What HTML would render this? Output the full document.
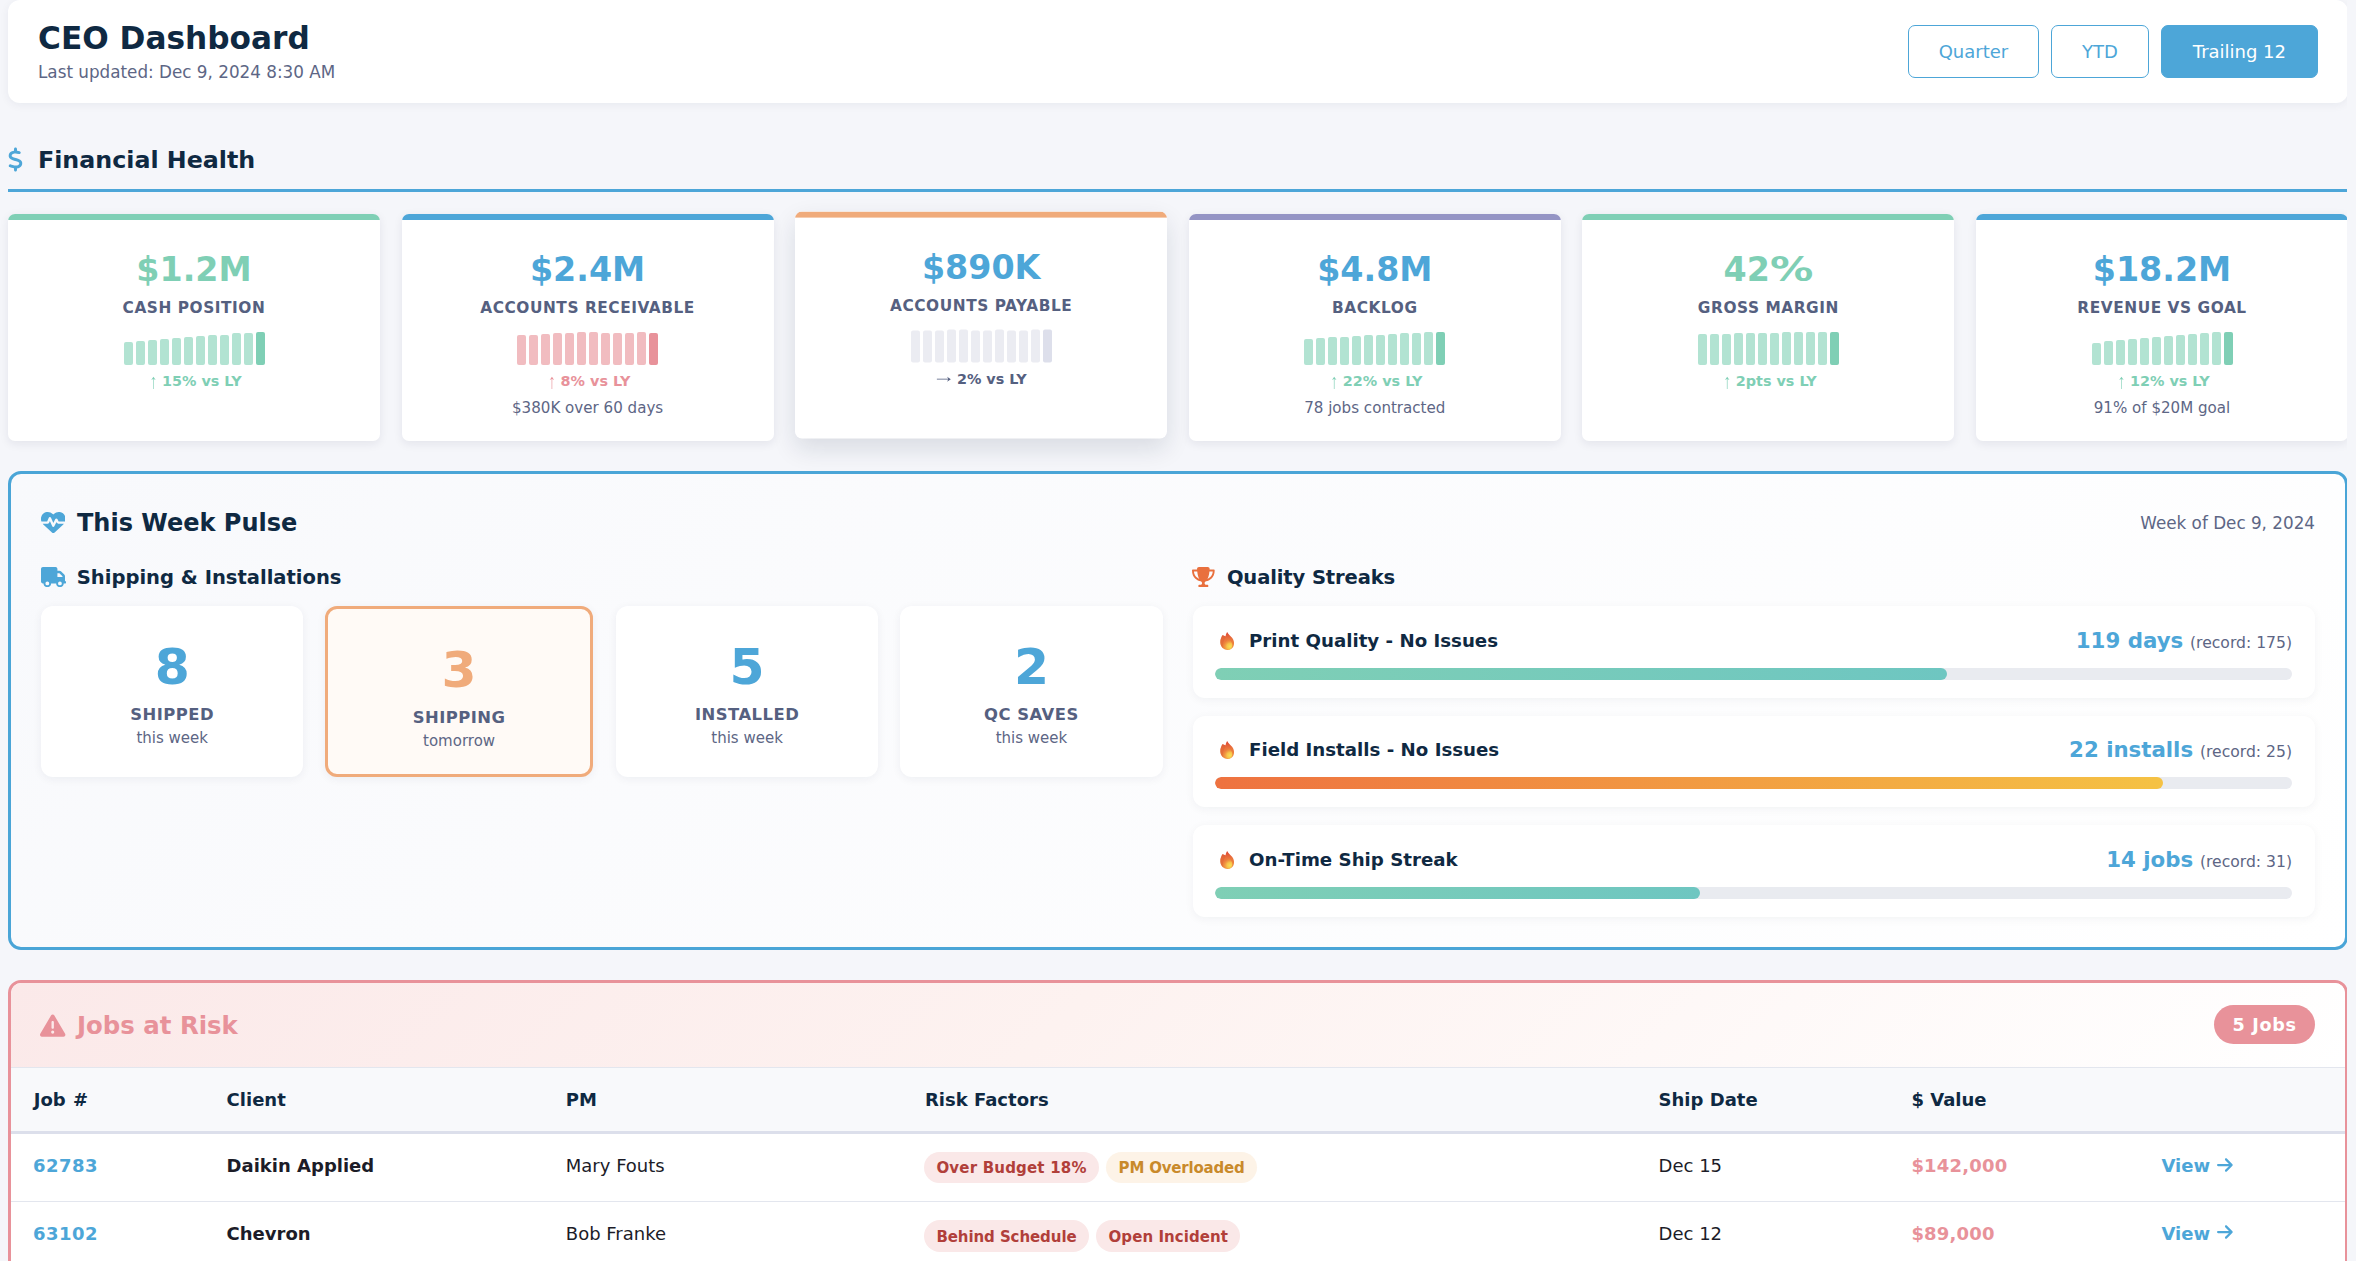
<!DOCTYPE html>
<html lang="en">
<head>
<meta charset="utf-8">
<title>CEO Dashboard</title>
<style>
*{box-sizing:border-box;margin:0;padding:0}
html,body{width:2356px;height:1261px;overflow:hidden}
body{background:#f5f6fa;font-family:"DejaVu Sans","Liberation Sans",sans-serif;color:#0f2942;position:relative}
svg{display:block;fill:currentColor}
.wrap{position:absolute;left:8px;top:0;width:2340px;height:1400px;clip-path:inset(-100px 1px -100px -100px)}

/* header */
.hdr{position:absolute;left:0;top:0;width:2340px;height:103px;background:#fff;border-radius:12px;box-shadow:0 2px 10px rgba(20,30,60,.06);}
.hdr h1{position:absolute;left:30px;top:18.5px;font-size:31.2px;line-height:38px;font-weight:700;color:#0f2942;white-space:nowrap}
.hdr .sub{position:absolute;left:30px;top:61.8px;font-size:16.8px;line-height:20px;color:#5d6685;white-space:nowrap}
.btns{position:absolute;right:30px;top:25px;display:flex;gap:11.9px}
.btn{height:53px;border:1px solid #4da6d8;border-radius:7px;color:#4da6d8;font-size:18px;line-height:51px;padding:0;text-align:center;background:#fff;white-space:nowrap}
.btn.on{background:#4da6d8;color:#fff}

/* section title */
.sec{position:absolute;left:0;top:131px;width:2340px;height:61px;border-bottom:3px solid #4da6d8}
.sec .ico{position:absolute;left:-.4px;top:15.6px;width:15px;height:25px;color:#4da6d8}
.sec h2{position:absolute;left:30px;top:12px;font-size:23.75px;line-height:34px;font-weight:700;color:#0f2942;white-space:nowrap}

/* KPI */
.kpi{position:absolute;top:214px;width:372px;height:227px;background:#fff;border-radius:7px;overflow:hidden;box-shadow:0 2.4px 9.6px rgba(20,30,60,.08);text-align:center}
.kpi:before{content:"";position:absolute;left:0;top:0;right:0;height:6px;background:var(--c)}
.kpi.hov{transform:translateY(-2.4px);box-shadow:0 9.6px 24px rgba(20,30,60,.12)}
.kpi .val{position:absolute;left:0;right:0;top:34.2px;font-size:33.3px;line-height:44px;font-weight:700;color:var(--v)}
.kpi .lab{position:absolute;left:0;right:0;top:84px;font-size:15.36px;line-height:20px;font-weight:700;color:#556080;letter-spacing:.55px;text-transform:uppercase}
.kpi .spark{position:absolute;left:0;right:0;top:115px;height:36px;display:flex;justify-content:center;align-items:flex-end;gap:3px}
.kpi .spark i{display:block;width:9px;border-radius:2px;background:var(--s)}
.kpi .spark i:last-child{background:var(--l)}
.kpi .tr{position:absolute;left:0;right:0;top:158px;font-size:14.4px;line-height:18px;font-weight:700;color:var(--t)}
.kpi .tr b{font-weight:400;font-family:"WenQuanYi Zen Hei","Liberation Sans",sans-serif;position:relative;top:2px;margin-right:-3.7px;line-height:0}
.kpi .tr b.r{font-size:16.2px;top:1.2px;margin-right:0}
.kpi .ex{position:absolute;left:0;right:0;top:185px;font-size:15.1px;line-height:19px;color:#5d6685}

/* pulse */
.pulse{position:absolute;left:0;top:471px;width:2340px;height:479.4px;border:3px solid #4aa5d7;border-radius:13px;background:linear-gradient(135deg,#f8f9fc 0%,#ffffff 100%)}
.abs{position:absolute;white-space:nowrap}
.pulse .ttl{left:66px;top:32.3px;font-size:24px;line-height:34px;font-weight:700;color:#0f2942}
.pulse .wk{right:30px;top:38px;font-size:16.8px;line-height:22px;color:#5d6685}
.pulse h3{position:absolute;white-space:nowrap;top:89.6px;font-size:19.55px;line-height:28px;font-weight:700;color:#0f2942}
.stat{position:absolute;top:132px;height:171.4px;background:#fff;border-radius:12px;box-shadow:0 2px 10px rgba(20,30,60,.06);text-align:center}
.stat.hl{border:3px solid #f0ab7b;background:#fffaf6}
.stat .n{position:absolute;left:0;right:0;top:31.3px;font-size:50.4px;line-height:60px;font-weight:700;color:#4da6d8}
.stat.hl .n{color:#f0ab7b}
.stat .l{position:absolute;left:0;right:0;top:98px;font-size:16.4px;line-height:22px;font-weight:700;color:#556080;letter-spacing:.5px;text-transform:uppercase}
.stat .s{position:absolute;left:0;right:0;top:121.7px;font-size:15px;line-height:20px;color:#5d6685}
.streak{position:absolute;left:1182px;width:1122px;height:91.7px;background:#fff;border-radius:12px;box-shadow:0 2px 10px rgba(20,30,60,.05)}
.streak .fl{position:absolute;left:19px;top:20px;width:30px;height:30px}
.streak .nm{left:56px;top:21px;font-size:18.2px;line-height:28px;font-weight:700;color:#0f2942}
.streak .rt{right:23px;top:18.9px;font-size:15.6px;line-height:32px;color:#5d6685}
.streak .rt b{margin-right:1.9px;font-size:21.3px;font-weight:700;color:#4da6d8}
.streak .trk{position:absolute;left:21.9px;right:23px;top:62px;height:12px;border-radius:6px;background:#e9ebf0;overflow:hidden}
.streak .trk i{display:block;height:100%;border-radius:6px;background:linear-gradient(90deg,#7fcfb5,#6ec6c1)}
.streak .trk i.hot{background:linear-gradient(90deg,#ee7240,#f5c244)}

/* risk */
.risk{position:absolute;left:0;top:980.2px;width:2340px;height:420px;border:3px solid #e8929a;border-radius:13px;background:#fff;overflow:hidden}
.risk .rh{position:absolute;left:0;top:0;right:0;height:84.5px;background:linear-gradient(135deg,#fbe9e9 0%,#fdf2f0 45%,#ffffff 100%);border-bottom:1px solid #e3e6ee}
.risk .rt{left:66px;top:25.8px;font-size:24.4px;line-height:34px;font-weight:700;color:#e8929a}
.risk .bdg{right:30px;top:21.8px;height:39px;width:101.5px;text-align:center;border-radius:20px;background:#e8929a;color:#fff;font-weight:700;font-size:17.6px;letter-spacing:.7px;text-indent:.7px;line-height:40.8px;padding:0}
.risk .th{position:absolute;left:0;right:0;top:85px;height:66px;background:#f8f9fb;border-bottom:3.4px solid #dcdfeb}
.risk .th div{position:absolute;white-space:nowrap;top:18px;font-size:18px;line-height:28px;font-weight:700;color:#0f2942}
.risk .tr{position:absolute;left:0;right:0;height:67.7px;border-bottom:1px solid #e3e6ee;font-size:18px;line-height:28px;color:#1c1c28}
.risk .tr>div{position:absolute;white-space:nowrap;top:18px}
.risk .tr .j{left:22px;font-weight:700;color:#4da6d8;letter-spacing:.45px}
.risk .tr .c{left:215.6px;font-weight:700}
.risk .tr .p{left:554.8px}
.risk .tr .f{left:913px;top:18px;display:flex;gap:7.2px}
.risk .tr .d{left:1647.6px}
.risk .tr .v{left:1900.4px;font-weight:700;color:#e8929a;letter-spacing:.2px}
.risk .tr .a{left:2150.4px;font-weight:700;color:#4da6d8}
.risk .tr .a svg{display:inline-block;width:15.8px;height:18px;vertical-align:-1.6px;margin-left:6.7px}
.chip{height:31px;border-radius:16px;padding:0 12.4px;font-size:15px;line-height:31px;font-weight:700;background:#fae8e8;color:#b13f3a}
.chip.w{background:#fdf3e7;color:#c98a2b}
.streak.s2 .trk{top:61px}.streak.s2 .rt{top:17.9px}.streak.s3 .rt{top:18.5px}.streak.s2 .nm{top:20px}.streak.s2 .fl{top:19px}.streak.s3 .nm{top:20.6px}
.pc{display:inline-block;transform:scaleX(1.3);transform-origin:0 50%;margin-right:10px}
</style>
</head>
<body>
<div class="wrap">

<div class="hdr">
  <h1>CEO Dashboard</h1>
  <div class="sub">Last updated: Dec 9, 2024 8:30 AM</div>
  <div class="btns"><div class="btn" style="width:131.1px">Quarter</div><div class="btn" style="width:98px">YTD</div><div class="btn on" style="width:157.2px">Trailing 12</div></div>
</div>

<div class="sec">
  <svg class="ico" viewBox="0 0 320 512"><path d="M160 0c17.7 0 32 14.3 32 32V67.700c1.600 .200 3.100 .400 4.700 .700c.4 .1 .7 .1 1.100 .200l48 8.800c17.400 3.200 28.900 19.900 25.700 37.200s-19.900 28.900-37.200 25.700l-47.500-8.700c-31.300-4.600-58.900-1.500-78.300 6.200s-27.200 18.300-29 28.100c-2 10.700-.5 16.700 1.200 20.400c1.800 3.900 5.500 8.300 12.800 13.200c16.300 10.700 41.300 17.700 73.700 26.300l2.900 .8c28.600 7.600 63.600 16.800 89.600 33.800c14.200 9.300 27.600 21.900 35.900 39.500c8.500 17.900 10.300 37.900 6.400 59.200c-6.900 38-33.100 63.400-65.600 76.700c-13.700 5.600-28.600 9.200-44.400 11V480c0 17.700-14.300 32-32 32s-32-14.300-32-32V445.100c-.4-.1-.9-.1-1.300-.2l-.2 0 0 0c-24.400-3.800-64.500-14.300-91.500-26.300c-16.100-7.200-23.400-26.100-16.200-42.200s26.100-23.400 42.200-16.200c20.900 9.300 55.300 18.500 75.200 21.600c31.900 4.700 58.200 2 76-5.300c16.900-6.900 24.600-16.900 26.800-28.900c1.900-10.600 .4-16.700-1.300-20.400c-1.900-4-5.600-8.400-13-13.300c-16.400-10.700-41.500-17.700-74-26.300l-2.800-.7 0 0C119.400 279.300 84.400 270 58.400 253c-14.200-9.300-27.500-22-35.800-39.600c-8.400-17.900-10.100-37.900-6.100-59.200C23.700 116 52.300 91.200 84.800 78.300c13.300-5.300 27.900-8.900 43.200-11V32c0-17.700 14.300-32 32-32z"/></svg>
  <h2>Financial Health</h2>
</div>

<!--KPI-S-->
<div class="kpi" style="left:0.0px;--c:#7fcfb5;--v:#7fcfb5;--s:#b2e3d2;--l:#7fcfb5;--t:#7fcfb5">
  <div class="val">$1.2M</div><div class="lab">CASH POSITION</div>
  <div class="spark"><i style="height:23px"></i><i style="height:24px"></i><i style="height:25px"></i><i style="height:26px"></i><i style="height:27px"></i><i style="height:28px"></i><i style="height:29px"></i><i style="height:30px"></i><i style="height:30px"></i><i style="height:32px"></i><i style="height:32px"></i><i style="height:33px"></i></div>
  <div class="tr"><b>↑</b> 15% vs LY</div>
</div>
<div class="kpi" style="left:393.6px;--c:#4da6d8;--v:#4da6d8;--s:#f1bcc0;--l:#e8929a;--t:#e8929a">
  <div class="val">$2.4M</div><div class="lab">ACCOUNTS RECEIVABLE</div>
  <div class="spark"><i style="height:30px"></i><i style="height:30px"></i><i style="height:31px"></i><i style="height:32px"></i><i style="height:32px"></i><i style="height:33px"></i><i style="height:33px"></i><i style="height:32px"></i><i style="height:32px"></i><i style="height:32px"></i><i style="height:33px"></i><i style="height:32px"></i></div>
  <div class="tr"><b>↑</b> 8% vs LY</div><div class="ex">$380K over 60 days</div>
</div>
<div class="kpi hov" style="left:787.2px;--c:#f0ab7b;--v:#4da6d8;--s:#ebecf2;--l:#dddfeb;--t:#556080">
  <div class="val">$890K</div><div class="lab">ACCOUNTS PAYABLE</div>
  <div class="spark"><i style="height:32px"></i><i style="height:32px"></i><i style="height:32px"></i><i style="height:33px"></i><i style="height:33px"></i><i style="height:32px"></i><i style="height:32px"></i><i style="height:33px"></i><i style="height:32px"></i><i style="height:32px"></i><i style="height:33px"></i><i style="height:33px"></i></div>
  <div class="tr"><b class="r">→</b> 2% vs LY</div>
</div>
<div class="kpi" style="left:1180.8px;--c:#9494c4;--v:#4da6d8;--s:#b2e3d2;--l:#7fcfb5;--t:#7fcfb5">
  <div class="val">$4.8M</div><div class="lab">BACKLOG</div>
  <div class="spark"><i style="height:26px"></i><i style="height:27px"></i><i style="height:28px"></i><i style="height:28px"></i><i style="height:29px"></i><i style="height:30px"></i><i style="height:30px"></i><i style="height:31px"></i><i style="height:32px"></i><i style="height:32px"></i><i style="height:33px"></i><i style="height:33px"></i></div>
  <div class="tr"><b>↑</b> 22% vs LY</div><div class="ex">78 jobs contracted</div>
</div>
<div class="kpi" style="left:1574.4px;--c:#7fcfb5;--v:#7fcfb5;--s:#b2e3d2;--l:#7fcfb5;--t:#7fcfb5">
  <div class="val">42<span class="pc">%</span></div><div class="lab">GROSS MARGIN</div>
  <div class="spark"><i style="height:31px"></i><i style="height:31px"></i><i style="height:31px"></i><i style="height:32px"></i><i style="height:32px"></i><i style="height:32px"></i><i style="height:32px"></i><i style="height:33px"></i><i style="height:33px"></i><i style="height:33px"></i><i style="height:33px"></i><i style="height:33px"></i></div>
  <div class="tr"><b>↑</b> 2pts vs LY</div>
</div>
<div class="kpi" style="left:1968.0px;--c:#4da6d8;--v:#4da6d8;--s:#b2e3d2;--l:#7fcfb5;--t:#7fcfb5">
  <div class="val">$18.2M</div><div class="lab">REVENUE VS GOAL</div>
  <div class="spark"><i style="height:22px"></i><i style="height:24px"></i><i style="height:25px"></i><i style="height:26px"></i><i style="height:27px"></i><i style="height:28px"></i><i style="height:29px"></i><i style="height:30px"></i><i style="height:31px"></i><i style="height:32px"></i><i style="height:33px"></i><i style="height:33px"></i></div>
  <div class="tr"><b>↑</b> 12% vs LY</div><div class="ex">91% of $20M goal</div>
</div>
<!--KPI-E-->

<!--PULSE-S-->
<div class="pulse"><svg width="0" height="0" style="position:absolute"><defs><linearGradient id="fg" x1="0" y1="0" x2="0" y2="1"><stop offset="0" stop-color="#dd4436"/><stop offset=".4" stop-color="#ea733c"/><stop offset="1" stop-color="#f2963f"/></linearGradient><radialGradient id="fi" cx="18" cy="20.500" r="7" gradientUnits="userSpaceOnUse"><stop offset="0" stop-color="#f9e052"/><stop offset=".45" stop-color="#f6c24a"/><stop offset="1" stop-color="#ee8a3f" stop-opacity=".2"/></radialGradient></defs></svg>
<svg class="abs" style="left:29.7px;top:35.6px;width:24.6px;height:24.6px;color:#4da6d8" viewBox="0 0 512 512"><path d="M228.3 469.1L47.6 300.4c-4.2-3.900-8.200-8.100-11.900-12.400h87c22.600 0 43-13.600 51.700-34.500l10.500-25.200 49.300 109.500c3.800 8.500 12.100 14 21.400 14.100s17.800-5 22-13.300L320 253.700l1.700 3.400c9.500 19 28.900 31 50.100 31H476.300c-3.700 4.300-7.700 8.500-11.900 12.400L283.700 469.100c-7.500 7-17.400 10.900-27.700 10.900s-20.200-3.900-27.700-10.900zM503.700 240h-132c-3 0-5.800-1.700-7.200-4.400l-23.200-46.300c-4.100-8.100-12.400-13.300-21.500-13.300s-17.400 5.100-21.500 13.300l-41.400 82.800L205.900 158.200c-3.900-8.700-12.700-14.300-22.200-14.100s-18.100 5.900-21.800 14.800l-31.800 76.300c-1.200 3-4.200 4.900-7.400 4.900H16c-2.600 0-5 .4-7.300 1.100C3 225.200 0 208.200 0 190.900v-5.800c0-69.900 50.500-129.500 119.400-141C165 36.500 211.400 51.400 244 84l12 12 12-12c32.600-32.600 79-47.500 124.600-39.900C461.500 55.600 512 115.200 512 185.100v5.800c0 16.900-2.800 33.500-8.300 49.100z"/></svg>
<div class="abs ttl">This Week Pulse</div>
<div class="abs wk">Week of Dec 9, 2024</div>
<svg class="abs" style="left:29.7px;top:92.5px;width:25.25px;height:20.2px;color:#4da6d8" viewBox="0 0 640 512"><path d="M48 0C21.500 0 0 21.500 0 48V368c0 26.500 21.500 48 48 48H64c0 53 43 96 96 96s96-43 96-96H384c0 53 43 96 96 96s96-43 96-96h32c17.700 0 32-14.300 32-32s-14.300-32-32-32V288 256 237.300c0-17-6.700-33.300-18.700-45.300L512 114.700c-12-12-28.300-18.700-45.300-18.700H416V48c0-26.500-21.500-48-48-48H48zM416 160h50.700L544 237.300V256H416V160zM112 416a48 48 0 1 1 96 0 48 48 0 1 1 -96 0zm368-48a48 48 0 1 1 0 96 48 48 0 1 1 0-96z"/></svg>
<h3 style="left:65.8px">Shipping &amp; Installations</h3>
<svg class="abs" style="left:1181.3px;top:92.5px;width:22.7px;height:20.2px;color:#e9703e" viewBox="0 0 576 512"><path d="M400 0H176c-26.500 0-48.100 21.800-47.100 48.200c.2 5.300 .4 10.600 .7 15.800H24C10.700 64 0 74.700 0 88c0 92.600 33.500 157 78.500 200.700c44.300 43.100 98.300 64.800 138.100 75.800c23.400 6.500 39.400 26 39.400 45.600c0 20.900-17 37.900-37.900 37.900H192c-17.700 0-32 14.300-32 32s14.300 32 32 32H384c17.700 0 32-14.300 32-32s-14.300-32-32-32H357.900C337 448 320 431 320 410.100c0-19.600 15.900-39.200 39.400-45.600c39.900-11 93.900-32.700 138.200-75.800C542.500 245 576 180.600 576 88c0-13.300-10.700-24-24-24H446.400c.3-5.200 .5-10.400 .7-15.800C448.100 21.800 426.500 0 400 0zM48.900 112h84.400c9.100 90.100 29.200 150.300 51.900 190.600c-24.900-11-50.800-26.500-73.200-48.300c-32-31.100-58-76-63-142.300zM464.100 254.300c-22.400 21.800-48.300 37.300-73.200 48.300c22.700-40.300 42.800-100.500 51.900-190.600h84.400c-5.100 66.300-31.100 111.200-63 142.300z"/></svg>
<h3 style="left:1215.9px;letter-spacing:-.12px">Quality Streaks</h3>
<div class="stat" style="left:30.1px;width:262.2px"><div class="n">8</div><div class="l">SHIPPED</div><div class="s">this week</div></div>
<div class="stat hl" style="left:313.9px;width:268.4px"><div class="n">3</div><div class="l">SHIPPING</div><div class="s">tomorrow</div></div>
<div class="stat" style="left:605px;width:262.2px"><div class="n">5</div><div class="l">INSTALLED</div><div class="s">this week</div></div>
<div class="stat" style="left:888.9px;width:263.1px"><div class="n">2</div><div class="l">QC SAVES</div><div class="s">this week</div></div>
<div class="streak" style="top:132px;height:91.6px"><svg class="fl" viewBox="0 0 30 30"><path d="M15.2 5.9C16 8 18.500 9.500 20.300 12C21.700 14 22.200 16 22 18C21.700 21.500 19 23.900 15.700 23.900C12 23.900 8.500 21 8.300 16.500C8.200 13.500 9.300 11 10.700 9C11.500 9.700 12.600 10.100 13.600 10.300C13.800 8.500 14.300 7 15.200 5.900Z" fill="url(#fg)"/><path d="M10.700 9C9.300 11 8.200 13.500 8.300 16.500C8.400 19.300 9.700 21.500 11.500 22.700C10.400 19 11.200 15 13.600 11.500C12.500 11 11.400 10.100 10.700 9Z" fill="#dc6238" opacity=".55"/><path d="M16.800 12.500C19.300 15.200 20.600 17.300 20.300 20C20 22.300 18.200 23.700 16 23.700C13.500 23.700 11.700 22.100 11.700 19.600C11.700 17 14.200 15.300 16.800 12.500Z" fill="url(#fi)"/></svg><div class="abs nm">Print Quality - No Issues</div><div class="abs rt"><b>119 days</b> (record: 175)</div><div class="trk"><i style="width:68%"></i></div></div>
<div class="streak s2" style="top:242px;height:90.6px"><svg class="fl" viewBox="0 0 30 30"><path d="M15.2 5.9C16 8 18.500 9.500 20.300 12C21.700 14 22.200 16 22 18C21.700 21.500 19 23.900 15.700 23.900C12 23.900 8.500 21 8.300 16.500C8.200 13.500 9.300 11 10.700 9C11.500 9.700 12.600 10.100 13.600 10.300C13.800 8.500 14.300 7 15.200 5.900Z" fill="url(#fg)"/><path d="M10.700 9C9.300 11 8.200 13.500 8.300 16.500C8.400 19.300 9.700 21.500 11.500 22.700C10.400 19 11.200 15 13.600 11.500C12.500 11 11.400 10.100 10.700 9Z" fill="#dc6238" opacity=".55"/><path d="M16.800 12.500C19.300 15.200 20.600 17.300 20.300 20C20 22.300 18.200 23.700 16 23.700C13.500 23.700 11.700 22.100 11.700 19.600C11.700 17 14.200 15.300 16.800 12.500Z" fill="url(#fi)"/></svg><div class="abs nm">Field Installs - No Issues</div><div class="abs rt"><b>22 installs</b> (record: 25)</div><div class="trk"><i class=hot style="width:88%"></i></div></div>
<div class="streak s3" style="top:351.1px;height:91.5px"><svg class="fl" viewBox="0 0 30 30"><path d="M15.2 5.9C16 8 18.500 9.500 20.300 12C21.700 14 22.200 16 22 18C21.700 21.500 19 23.900 15.700 23.900C12 23.900 8.500 21 8.300 16.500C8.200 13.500 9.300 11 10.700 9C11.500 9.700 12.600 10.100 13.600 10.300C13.800 8.500 14.300 7 15.200 5.900Z" fill="url(#fg)"/><path d="M10.700 9C9.300 11 8.200 13.500 8.300 16.500C8.400 19.300 9.700 21.500 11.500 22.700C10.400 19 11.200 15 13.600 11.500C12.500 11 11.400 10.100 10.700 9Z" fill="#dc6238" opacity=".55"/><path d="M16.800 12.500C19.300 15.200 20.600 17.300 20.300 20C20 22.300 18.200 23.700 16 23.700C13.500 23.700 11.700 22.100 11.700 19.600C11.700 17 14.200 15.300 16.800 12.500Z" fill="url(#fi)"/></svg><div class="abs nm">On-Time Ship Streak</div><div class="abs rt"><b>14 jobs</b> (record: 31)</div><div class="trk"><i style="width:45%"></i></div></div>
</div>
<!--PULSE-E-->

<!--RISK-S-->
<div class="risk">
<div class="rh">
<svg class="abs" style="left:29.3px;top:29.4px;width:25.4px;height:25.4px;color:#e8929a" viewBox="0 0 512 512"><path d="M256 32c14.200 0 27.300 7.500 34.500 19.800l216 368c7.300 12.400 7.300 27.700 .2 40.100S486.300 480 472 480H40c-14.300 0-27.600-7.700-34.700-20.100s-7-27.800 .2-40.100l216-368C228.700 39.500 241.800 32 256 32zm0 128c-13.300 0-24 10.700-24 24V296c0 13.300 10.700 24 24 24s24-10.700 24-24V184c0-13.300-10.700-24-24-24zm32 224a32 32 0 1 0 -64 0 32 32 0 1 0 64 0z"/></svg>
<div class="abs rt">Jobs at Risk</div>
<div class="abs bdg">5 Jobs</div>
</div>
<div class="th"><div style="left:22.8px;word-spacing:1px">Job #</div><div style="left:215.6px">Client</div><div style="left:554.8px">PM</div><div style="left:914px">Risk Factors</div><div style="left:1647.6px">Ship Date</div><div style="left:1900.4px">$ Value</div></div>
<div class="tr" style="top:151.0px"><div class="j">62783</div><div class="c">Daikin Applied</div><div class="p">Mary Fouts</div><div class="f"><span class="chip" style="letter-spacing:.19px;line-height:32.7px">Over Budget 18%</span><span class="chip w" style="letter-spacing:-.19px;line-height:32.7px">PM Overloaded</span></div><div class="d">Dec 15</div><div class="v">$142,000</div><div class="a">View<svg viewBox="0 0 448 512"><path d="M438.600 278.600c12.500-12.500 12.500-32.800 0-45.300l-160-160c-12.500-12.500-32.800-12.500-45.300 0s-12.500 32.800 0 45.300L338.800 224 32 224c-17.700 0-32 14.300-32 32s14.300 32 32 32l306.700 0L233.400 393.400c-12.500 12.500-12.500 32.800 0 45.300s32.800 12.500 45.300 0l160-160z"/></svg></div></div>
<div class="tr" style="top:218.7px"><div class="j">63102</div><div class="c">Chevron</div><div class="p">Bob Franke</div><div class="f"><span class="chip" style="letter-spacing:-.08px;height:31.8px;line-height:34.2px">Behind Schedule</span><span class="chip" style="letter-spacing:.07px;height:31.8px;line-height:34.2px">Open Incident</span></div><div class="d">Dec 12</div><div class="v">$89,000</div><div class="a">View<svg viewBox="0 0 448 512"><path d="M438.600 278.600c12.500-12.500 12.500-32.800 0-45.300l-160-160c-12.500-12.500-32.800-12.500-45.300 0s-12.500 32.800 0 45.300L338.800 224 32 224c-17.700 0-32 14.300-32 32s14.300 32 32 32l306.700 0L233.400 393.400c-12.500 12.500-12.500 32.800 0 45.300s32.800 12.500 45.300 0l160-160z"/></svg></div></div>
<div class="tr" style="top:286.4px"><div class="j">62955</div><div class="c">Trane Technologies</div><div class="p">Lisa Chen</div><div class="f"><span class="chip w">Materials Delayed</span><span class="chip">Over Budget 9%</span></div><div class="d">Dec 18</div><div class="v">$67,500</div><div class="a">View<svg viewBox="0 0 448 512"><path d="M438.600 278.600c12.500-12.500 12.500-32.800 0-45.300l-160-160c-12.500-12.500-32.800-12.500-45.300 0s-12.500 32.800 0 45.300L338.800 224 32 224c-17.700 0-32 14.300-32 32s14.300 32 32 32l306.700 0L233.400 393.400c-12.500 12.500-12.500 32.800 0 45.300s32.800 12.500 45.300 0l160-160z"/></svg></div></div>
<div class="tr" style="top:354.1px"><div class="j">63044</div><div class="c">Carrier Global</div><div class="p">Mary Fouts</div><div class="f"><span class="chip">QC Rework</span></div><div class="d">Dec 20</div><div class="v">$54,200</div><div class="a">View<svg viewBox="0 0 448 512"><path d="M438.600 278.600c12.500-12.500 12.500-32.800 0-45.300l-160-160c-12.500-12.500-32.800-12.500-45.300 0s-12.500 32.800 0 45.300L338.800 224 32 224c-17.700 0-32 14.300-32 32s14.300 32 32 32l306.700 0L233.400 393.400c-12.500 12.500-12.500 32.800 0 45.300s32.800 12.500 45.300 0l160-160z"/></svg></div></div>
<div class="tr" style="top:421.8px"><div class="j">63120</div><div class="c">Johnson Controls</div><div class="p">Tom Alvarez</div><div class="f"><span class="chip">Behind Schedule</span><span class="chip w">PM Overloaded</span></div><div class="d">Dec 22</div><div class="v">$48,900</div><div class="a">View<svg viewBox="0 0 448 512"><path d="M438.600 278.600c12.500-12.500 12.500-32.800 0-45.300l-160-160c-12.500-12.500-32.800-12.500-45.300 0s-12.500 32.800 0 45.300L338.800 224 32 224c-17.700 0-32 14.300-32 32s14.300 32 32 32l306.700 0L233.400 393.400c-12.500 12.500-12.500 32.800 0 45.300s32.800 12.500 45.300 0l160-160z"/></svg></div></div>
</div>
<!--RISK-E-->

</div>
</body>
</html>
